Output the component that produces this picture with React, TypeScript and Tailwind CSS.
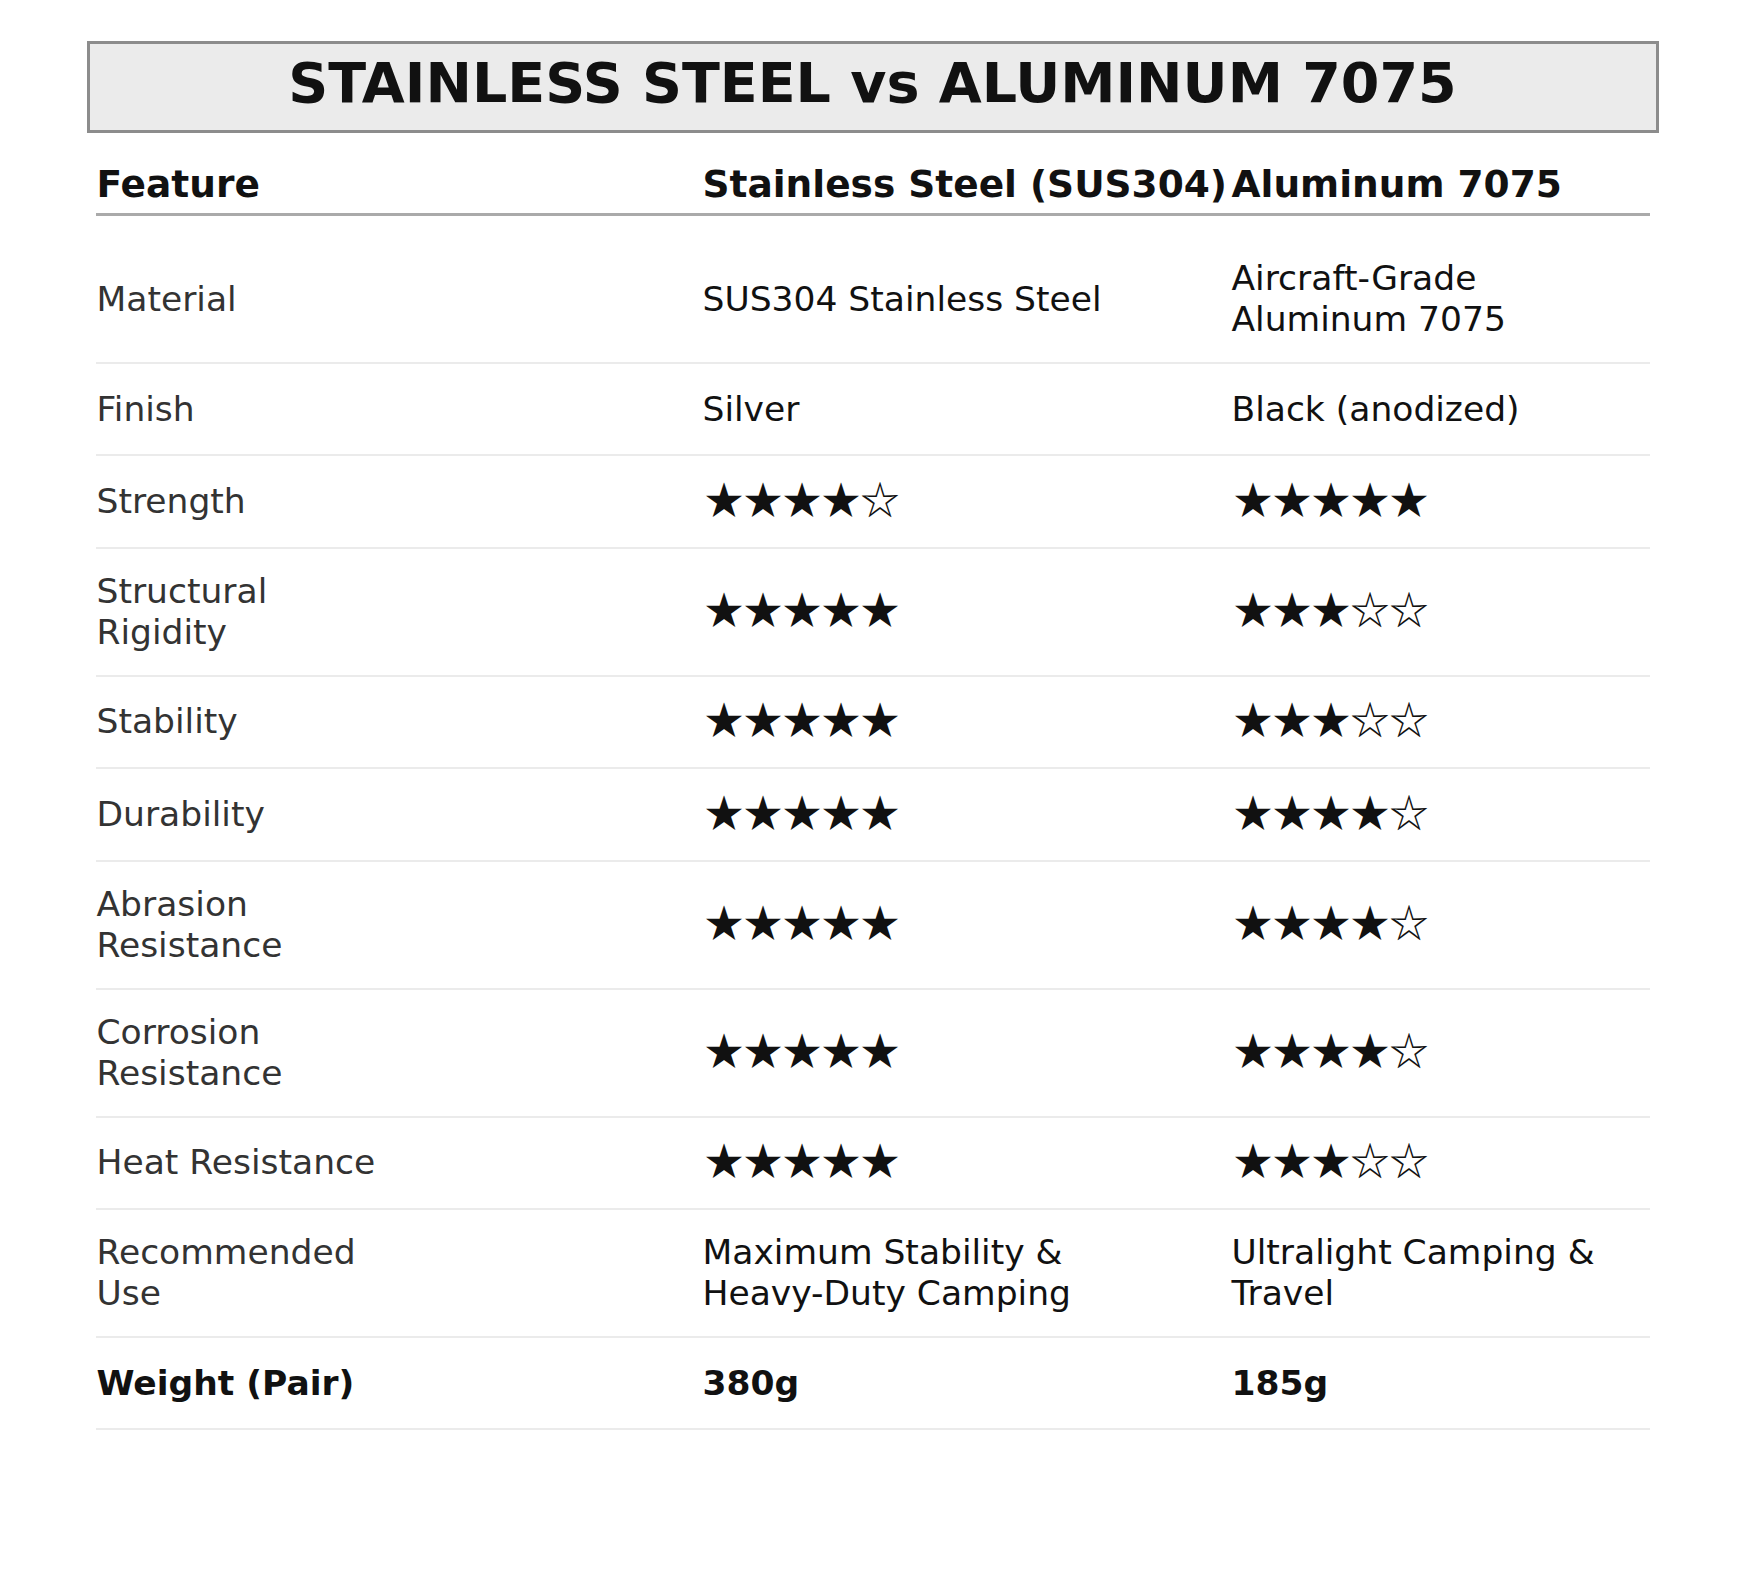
import React from "react";

type Row = {
  feature: string;
  steel: React.ReactNode;
  alu: React.ReactNode;
  bold?: boolean;
};

const rows: Row[] = [
  { feature: "Material", steel: "SUS304 Stainless Steel", alu: "Aircraft-Grade Aluminum 7075" },
  { feature: "Finish", steel: "Silver", alu: "Black (anodized)" },
  { feature: "Strength", steel: 4, alu: 5 },
  { feature: "Structural Rigidity", steel: 5, alu: 3 },
  { feature: "Stability", steel: 5, alu: 3 },
  { feature: "Durability", steel: 5, alu: 4 },
  { feature: "Abrasion Resistance", steel: 5, alu: 4 },
  { feature: "Corrosion Resistance", steel: 5, alu: 4 },
  { feature: "Heat Resistance", steel: 5, alu: 3 },
  {
    feature: "Recommended Use",
    steel: (
      <>
        Maximum Stability &amp;{" "}
        <span className="whitespace-nowrap">Heavy-Duty</span> Camping
      </>
    ),
    alu: "Ultralight Camping & Travel",
  },
  { feature: "Weight (Pair)", steel: "380g", alu: "185g", bold: true },
];

function Stars({ n }: { n: number }) {
  return (
    <span className="block pb-[8px] pl-[2px] text-[39px] leading-[33px] font-['Noto_Sans_CJK_JP','DejaVu_Sans',sans-serif] text-[#111]">
      {"★".repeat(n) + "☆".repeat(5 - n)}
    </span>
  );
}

function Cell({ value, bold }: { value: React.ReactNode; bold?: boolean }) {
  if (typeof value === "number") return <Stars n={value} />;
  return (
    <div className={bold ? "font-bold text-[#111]" : "text-[#111]"}>{value}</div>
  );
}

export default function App() {
  return (
    <div className="min-h-[1580px] bg-white font-['DejaVu_Sans',sans-serif]">
      <div className="mx-auto w-[1572px] pt-[41px]">
        <div className="flex h-[92px] items-center justify-center border-[3px] border-[#8c8c8c] bg-[#ebebeb] pb-[8px]">
          <h1 className="text-[55.5px] leading-[66px] font-bold text-[#111]">
            STAINLESS STEEL vs ALUMINUM 7075
          </h1>
        </div>

        <div className="mt-[29px] px-[9px]">
          <div className="grid grid-cols-[606px_529px_1fr] items-end border-b-[3px] border-[#aaa] pb-[7px] pl-[1px] text-[37.5px] leading-[44px] font-bold text-[#111]">
            <div>Feature</div>
            <div>Stainless Steel (SUS304)</div>
            <div>Aluminum 7075</div>
          </div>

          <div className="mt-[20px]">
            {rows.map((r) => (
              <div
                key={r.feature}
                className="grid min-h-[92.4px] grid-cols-[607px_529px_1fr] items-center border-b-2 border-[#ebebeb] py-[22px] text-[34.5px] leading-[41px]"
              >
                <div
                  className={
                    r.bold
                      ? "max-w-[300px] pl-[1px] font-bold text-[#111]"
                      : "max-w-[300px] pl-[1px] text-[#333]"
                  }
                >
                  {r.feature}
                </div>
                <Cell value={r.steel} bold={r.bold} />
                <Cell value={r.alu} bold={r.bold} />
              </div>
            ))}
          </div>
        </div>
      </div>
    </div>
  );
}
